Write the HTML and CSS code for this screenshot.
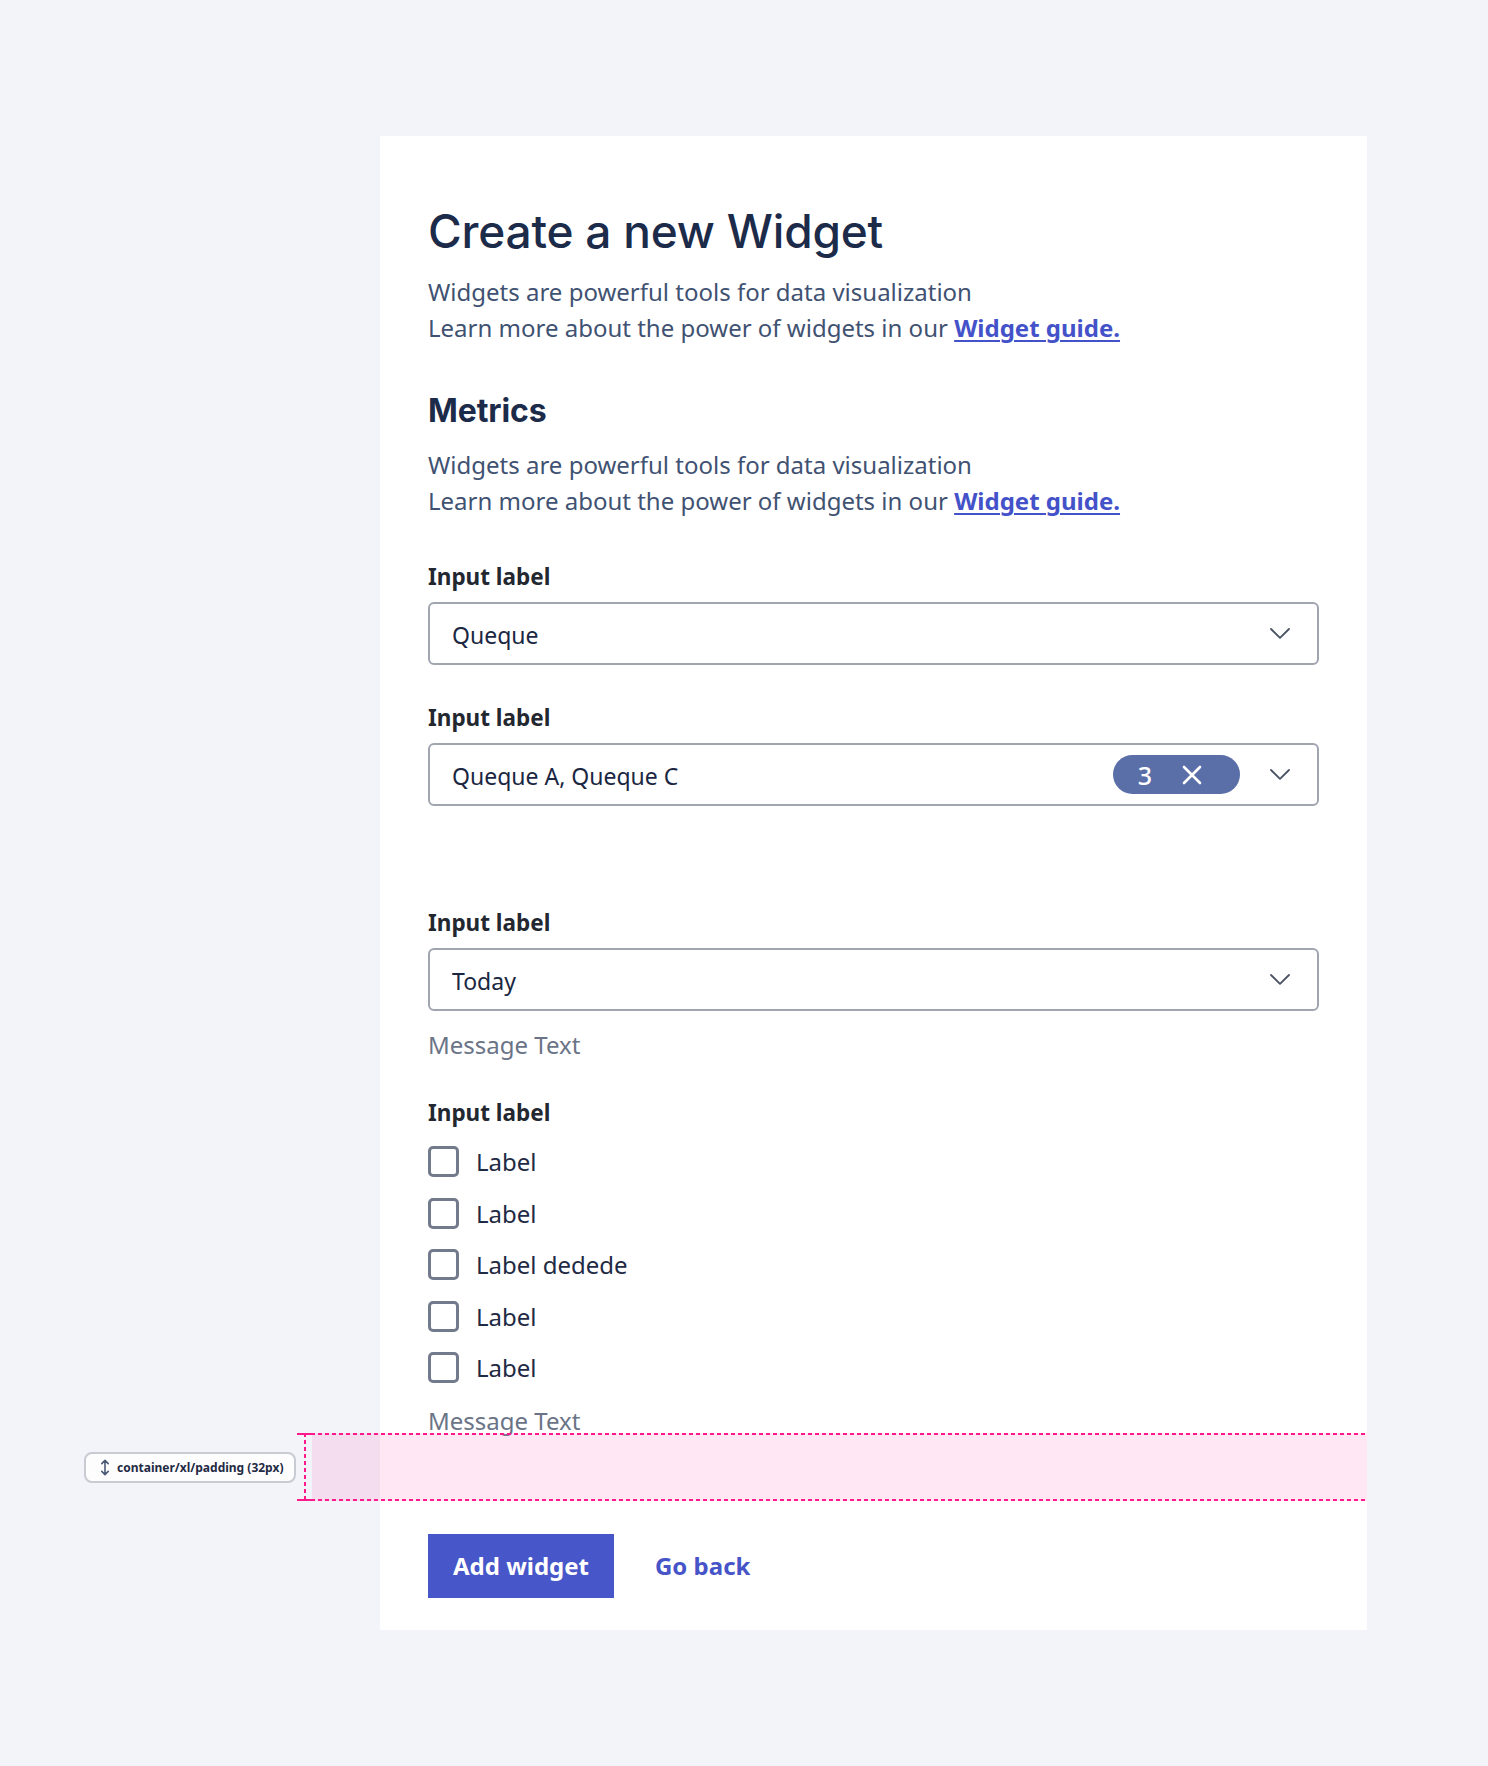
FILE: index.html
```html
<!DOCTYPE html>
<html lang="en">
<head>
<meta charset="utf-8">
<title>Create a new Widget</title>
<link rel="stylesheet" href="styles.css">
</head>
<body>
<div class="page">
  <main class="card">
    <h1 class="title">Create a new Widget</h1>
    <p class="lead">Widgets are powerful tools for data visualization<br>Learn more about the power of widgets in our <a href="#" class="link">Widget guide.</a></p>

    <h2 class="section-title">Metrics</h2>
    <p class="lead">Widgets are powerful tools for data visualization<br>Learn more about the power of widgets in our <a href="#" class="link">Widget guide.</a></p>

    <div class="field field--first">
      <div class="field-label">Input label</div>
      <div class="select">
        <span class="select-value">Queque</span>
        <svg class="chevron" width="20" height="11" viewBox="0 0 20 11"><path d="M1 1 L10 9.8 L19 1" fill="none" stroke="#4a5263" stroke-width="1.8" stroke-linecap="round" stroke-linejoin="round"/></svg>
      </div>
    </div>

    <div class="field">
      <div class="field-label">Input label</div>
      <div class="select">
        <span class="select-value">Queque A, Queque C</span>
        <span class="pill">
          <span class="pill-count">3</span>
          <svg class="pill-x" width="20" height="20" viewBox="0 0 20 20"><path d="M2 2 L18 18 M18 2 L2 18" fill="none" stroke="#ffffff" stroke-width="2.6" stroke-linecap="round"/></svg>
        </span>
        <svg class="chevron" width="20" height="11" viewBox="0 0 20 11"><path d="M1 1 L10 9.8 L19 1" fill="none" stroke="#4a5263" stroke-width="1.8" stroke-linecap="round" stroke-linejoin="round"/></svg>
      </div>
    </div>

    <div class="field field--spaced">
      <div class="field-label">Input label</div>
      <div class="select">
        <span class="select-value">Today</span>
        <svg class="chevron" width="20" height="11" viewBox="0 0 20 11"><path d="M1 1 L10 9.8 L19 1" fill="none" stroke="#4a5263" stroke-width="1.8" stroke-linecap="round" stroke-linejoin="round"/></svg>
      </div>
      <div class="message">Message Text</div>
    </div>

    <div class="field field--checks">
      <div class="field-label">Input label</div>
      <ul class="checklist">
        <li class="check"><span class="box"></span><span class="check-label">Label</span></li>
        <li class="check"><span class="box"></span><span class="check-label">Label</span></li>
        <li class="check"><span class="box"></span><span class="check-label">Label dedede</span></li>
        <li class="check"><span class="box"></span><span class="check-label">Label</span></li>
        <li class="check"><span class="box"></span><span class="check-label">Label</span></li>
      </ul>
      <div class="message message--last">Message Text</div>
    </div>

    <div class="spacer">
      <div class="band">
        <span class="band-rule"></span>
      </div>
      <div class="badge">
        <svg class="badge-icon" width="10" height="17" viewBox="0 0 10 17"><path d="M5 1.5 L5 15.5 M1.8 4.6 L5 1.4 L8.2 4.6 M1.8 12.4 L5 15.6 L8.2 12.4" fill="none" stroke="#4b5a75" stroke-width="1.6" stroke-linecap="round" stroke-linejoin="round"/></svg>
        <span class="badge-text">container/xl/padding (32px)</span>
      </div>
    </div>

    <div class="actions">
      <button class="btn btn--primary" type="button">Add widget</button>
      <button class="btn btn--ghost" type="button">Go back</button>
    </div>
  </main>
</div>
</body>
</html>
```

FILE: styles.css
```css
* { box-sizing: border-box; }

html, body {
  margin: 0;
  padding: 0;
  background: #f3f4f9;
}

body {
  font-family: "Noto Sans", "Open Sans", sans-serif;
  min-height: 1766px;
}

.page {
  padding: 136px 0 136px 380px;
}

.card {
  width: 987px;
  background: #ffffff;
  padding: 68px 48px 32px;
  display: flex;
  flex-direction: column;
}

.title {
  margin: 0;
  font-family: Inter, "Noto Sans", sans-serif;
  font-weight: 500;
  font-size: 46px;
  line-height: 54px;
  letter-spacing: -0.2px;
  color: #1c2b49;
}

.section-title {
  margin: 45px 0 0;
  font-family: Inter, "Noto Sans", sans-serif;
  font-weight: 700;
  font-size: 32px;
  line-height: 40px;
  letter-spacing: -0.1px;
  color: #1c2b49;
}

.lead {
  margin: 16px 0 0;
  font-size: 24px;
  line-height: 36px;
  color: #3f5272;
}

.link {
  color: #4452c9;
  font-weight: 700;
  text-decoration: underline;
  text-underline-offset: 3px;
  text-decoration-thickness: 2px;
}

.field {
  margin-top: 37px;
  display: flex;
  flex-direction: column;
}

.field--first { margin-top: 42px; }
.field--spaced { margin-top: 101px; }
.field--checks { margin-top: 36px; }

.field-label {
  font-weight: 700;
  font-size: 22.5px;
  line-height: 32px;
  color: #23272f;
  margin-bottom: 9px;
}

.select {
  height: 63px;
  border: 2px solid #a0a5b0;
  border-radius: 6px;
  display: flex;
  align-items: center;
  padding: 0 27px 0 22px;
  background: #ffffff;
}

.select-value {
  flex: 1;
  font-size: 23px;
  line-height: 32px;
  padding-top: 2px;
  color: #1b2742;
}

.chevron {
  display: block;
  flex: none;
}

.pill {
  display: flex;
  align-items: center;
  height: 39px;
  padding: 0 38px 0 25px;
  border-radius: 20px;
  background: #5a6ea8;
  margin-right: 30px;
  gap: 30px;
}

.pill-count {
  color: #ffffff;
  font-size: 25px;
  font-weight: 500;
  line-height: 32px;
}

.pill-x { display: block; }

.message {
  margin-top: 18px;
  font-size: 24px;
  line-height: 32px;
  color: #6b7487;
}

.message--last {
  margin-top: 24px;
  line-height: 28px;
}

.checklist {
  list-style: none;
  margin: 8px 0 0;
  padding: 0;
  display: flex;
  flex-direction: column;
  gap: 20.5px;
}

.check {
  display: flex;
  align-items: center;
  height: 31px;
  gap: 17px;
}

.box {
  width: 31px;
  height: 31px;
  border: 3px solid #737a8c;
  border-radius: 5px;
  background: #ffffff;
  flex: none;
}

.check-label {
  font-size: 24px;
  line-height: 31px;
  color: #1f2a44;
}

/* spacing annotation */
.spacer {
  position: relative;
  height: 66px;
}

.band {
  position: absolute;
  top: -2px;
  bottom: 0;
  left: -131px;
  right: -48px;
  background:
    repeating-linear-gradient(90deg, #ff1a8c 0 4px, transparent 4px 7px) top left / 100% 2px no-repeat,
    repeating-linear-gradient(90deg, #ff1a8c 0 4px, transparent 4px 7px) bottom left / 100% 2px no-repeat,
    linear-gradient(rgba(255, 20, 140, 0.1), rgba(255, 20, 140, 0.1)) 15px 0 / calc(100% - 15px) 100% no-repeat;
}

.band-rule {
  position: absolute;
  left: 7px;
  top: 0;
  bottom: 0;
  width: 2px;
  background: repeating-linear-gradient(180deg, #ff1a8c 0 4px, transparent 4px 7px);
}

.band-rule::before,
.band-rule::after {
  content: "";
  position: absolute;
  left: -7px;
  width: 14px;
  height: 2px;
  background: #ff1a8c;
}

.band-rule::before { top: 0; }
.band-rule::after { bottom: 0; }

.badge {
  position: absolute;
  left: -344px;
  top: 17px;
  width: 212px;
  height: 31px;
  display: flex;
  align-items: center;
  gap: 7px;
  padding: 0 8px 0 14px;
  background: #fdfdfe;
  border: 2px solid #c9cbd2;
  border-radius: 8px;
}

.badge-icon { display: block; flex: none; }

.badge-text {
  font-weight: 700;
  font-size: 12px;
  line-height: 16px;
  color: #1f2a44;
  white-space: nowrap;
}

.actions {
  margin-top: 33px;
  display: flex;
  align-items: center;
  gap: 16px;
}

.btn {
  height: 64px;
  padding: 0 25px;
  border: 0;
  border-radius: 0;
  font-family: "Noto Sans", "Open Sans", sans-serif;
  font-weight: 700;
  font-size: 24px;
  line-height: 32px;
  cursor: pointer;
}

.btn--primary {
  background: #4756c9;
  color: #ffffff;
}

.btn--ghost {
  background: transparent;
  color: #4654c8;
}
```
